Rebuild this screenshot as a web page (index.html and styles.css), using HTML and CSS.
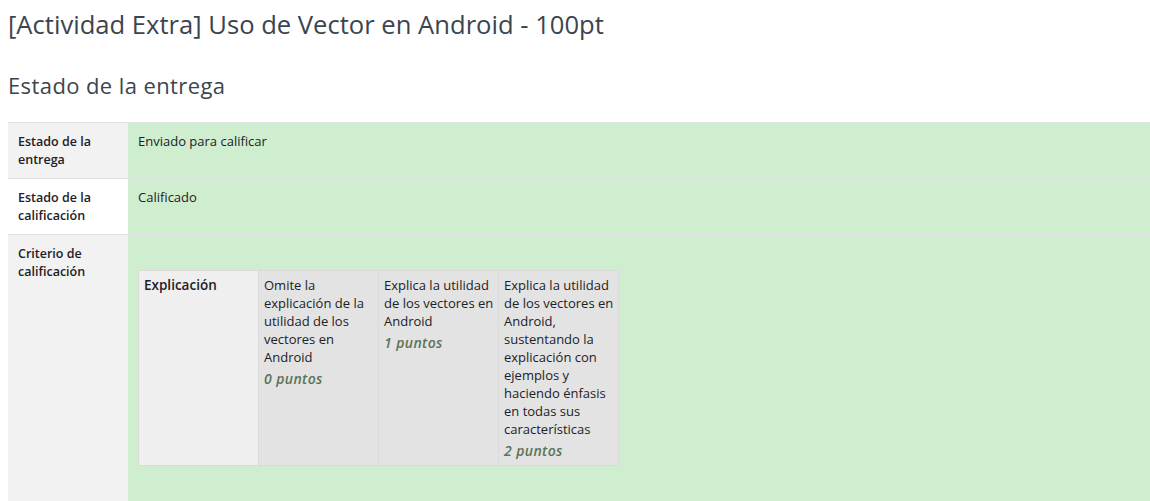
FILE: index.html
```html
<!DOCTYPE html>
<html lang="es">
<head>
<meta charset="utf-8">
<title>Uso de Vector en Android</title>
<link rel="stylesheet" href="styles.css">
</head>
<body>
<h2 class="page-title">[Actividad Extra] Uso de Vector en Android - 100pt</h2>
<h3 class="section-title">Estado de la entrega</h3>
<table class="status">
  <tr class="odd">
    <th>Estado de la entrega</th>
    <td>Enviado para calificar</td>
  </tr>
  <tr class="even">
    <th>Estado de la calificación</th>
    <td>Calificado</td>
  </tr>
  <tr class="odd">
    <th>Criterio de calificación</th>
    <td class="rubric-cell">
      <table class="rubric">
        <tr>
          <td class="crit">Explicación</td>
          <td class="level"><div class="def">Omite la explicación de la utilidad de los vectores en Android</div><div class="score">0 puntos</div></td>
          <td class="level"><div class="def">Explica la utilidad de los vectores en Android</div><div class="score">1 puntos</div></td>
          <td class="level"><div class="def">Explica la utilidad de los vectores en Android, sustentando la explicación con ejemplos y haciendo énfasis en todas sus características</div><div class="score">2 puntos</div></td>
        </tr>
      </table>
    </td>
  </tr>
</table>
</body>
</html>
```

FILE: styles.css
```css
html, body {
  background: #fff;
}
body {
  margin: 8px 0 0 8px;
  font-family: "Open Sans", sans-serif;
  color: #1d2125;
  font-size: 13px;
}
.page-title {
  margin: 0;
  font-size: 25.6px;
  line-height: 34px;
  font-weight: 400;
  color: #3b4550;
}
.section-title {
  margin: 29px 0 0;
  font-size: 22px;
  letter-spacing: 0.4px;
  line-height: 28px;
  font-weight: 400;
  color: #3b4550;
}
.status {
  margin-top: 23px;
  width: 100%;
  border-collapse: collapse;
}
.status th,
.status td.cell {
  text-align: left;
}
.status > tbody > tr > th,
.status > tbody > tr > td {
  border-top: 1px solid #dee2e6;
  padding: 10px;
  line-height: 17.5px;
  vertical-align: top;
  text-align: left;
  background: #cfeecf;
}
.status > tbody > tr > th {
  width: 100px;
  font-weight: 600;
  font-size: 12.5px;
}
.status > tbody > tr.odd > th { background: #f2f2f2; }
.status > tbody > tr.even > th { background: #fff; }
.status .rubric-cell { padding-bottom: 60px; }
.rubric {
  margin-top: 25px;
  border-collapse: collapse;
}
.rubric td {
  width: 110px;
  border: 1px solid #dadada;
  padding: 5px 4px 5px 5px;
  vertical-align: top;
  line-height: 18px;
  background: #e3e3e3;
  font-size: 13px;
}
.rubric td.crit {
  background: #efefef;
  font-weight: 600;
  font-size: 13.5px;
}
.rubric .score {
  margin-top: 4px;
  font-style: italic;
  font-weight: 600;
  font-size: 14px;
  letter-spacing: 0.4px;
  color: #5b7359;
}
```
